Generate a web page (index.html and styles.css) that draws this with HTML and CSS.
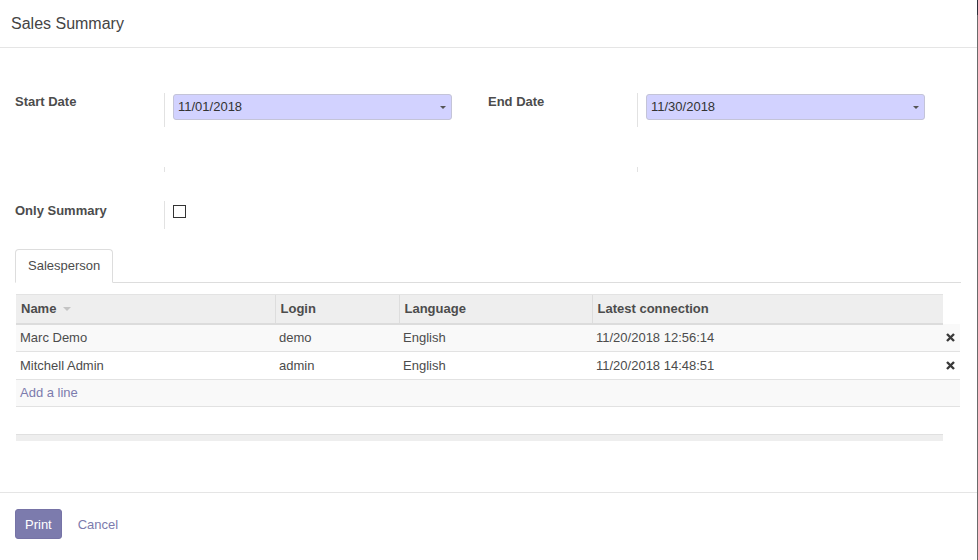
FILE: index.html
```html
<!DOCTYPE html>
<html>
<head>
<meta charset="utf-8">
<link rel="stylesheet" href="styles.css">
</head>
<body>
<div class="page">
  <div class="modal">
    <header class="head"><h4 class="title">Sales Summary</h4></header>
    <main class="content">
      <div class="form">
        <div class="grp">
          <div class="lbl">Start Date</div>
          <div class="fld row1"><div class="inp"><span>11/01/2018</span><i class="caret"></i></div></div>
          <div class="lbl"></div>
          <div class="fld row2"></div>
          <div class="lbl lbl3">Only Summary</div>
          <div class="fld row3"><span class="chk"></span></div>
        </div>
        <div class="grp">
          <div class="lbl">End Date</div>
          <div class="fld row1"><div class="inp"><span>11/30/2018</span><i class="caret"></i></div></div>
          <div class="lbl"></div>
          <div class="fld row2"></div>
        </div>
      </div>
      <div class="tabs"><div class="tab">Salesperson</div></div>
      <table class="list">
        <colgroup><col class="c1"><col class="c2"><col class="c3"><col class="c4"><col class="c5"></colgroup>
        <thead>
          <tr><th>Name <i class="sort"></i></th><th>Login</th><th>Language</th><th>Latest connection</th><th class="blank"></th></tr>
        </thead>
        <tbody>
          <tr class="odd"><td>Marc Demo</td><td>demo</td><td>English</td><td>11/20/2018 12:56:14</td><td class="del"><svg width="9" height="9" viewBox="0 0 9 9"><path d="M1 1L8 8M8 1L1 8" stroke="#3a3a3a" stroke-width="2.4"/></svg></td></tr>
          <tr><td>Mitchell Admin</td><td>admin</td><td>English</td><td>11/20/2018 14:48:51</td><td class="del"><svg width="9" height="9" viewBox="0 0 9 9"><path d="M1 1L8 8M8 1L1 8" stroke="#3a3a3a" stroke-width="2.4"/></svg></td></tr>
          <tr class="odd"><td colspan="5"><a class="add">Add a line</a></td></tr>
        </tbody>
      </table>
      <div class="listfoot"></div>
    </main>
    <footer class="foot">
      <button class="btn">Print</button>
      <a class="cancel">Cancel</a>
    </footer>
  </div>
  <div class="edge"></div>
</div>
</body>
</html>
```
FILE: styles.css
```css
* { box-sizing: border-box; }
html, body { margin: 0; padding: 0; background: #fff; }
body { font-family: "Liberation Sans", Arial, sans-serif; font-size: 13px; color: #4c4c4c; }
.page { display: flex; width: 978px; height: 560px; }
.modal { width: 977px; display: flex; flex-direction: column; }
.edge { width: 1px; background: linear-gradient(#2f2f3a 0, #2f2f3a 15px, #6a6a6a 15px); }
.head { height: 48px; border-bottom: 1px solid #e5e5e5; padding: 0 11px; }
.title { margin: 0; font-weight: normal; font-size: 16px; line-height: 47px; color: #444; }
.content { padding: 45px 15px 0 15px; height: 445px; border-bottom: 1px solid #e5e5e5; }
.form { display: flex; }
.grp { width: 473px; display: grid; grid-template-columns: 149px 1fr; align-content: start; }
.lbl { font-weight: bold; line-height: 17px; padding-top: 0; color: #4c4c4c; }
.fld { border-left: 1px solid #e2e2e2; padding-left: 8px; }
.row1 { height: 34px; padding-top: 1px; }
.row2 { height: 5px; margin-top: 40px; }
.lbl3 { margin-top: 29px; padding-top: 1px; }
.row3 { height: 28px; margin-top: 29px; padding-top: 4px; }
.inp { width: 279px; height: 26px; background: #d2d2ff; border: 1px solid #c4c4d8; border-radius: 3px; display: flex; align-items: center; justify-content: space-between; padding: 0 5px 1px 4px; color: #333; }
.caret { width: 0; height: 0; border-left: 3px solid transparent; border-right: 3px solid transparent; border-top: 3px solid #555; margin-top: 1px; }
.chk { display: block; width: 13px; height: 13px; border: 1px solid #333; background: #fff; }
.tabs { margin-top: 20px; width: 946px; border-bottom: 1px solid #ddd; display: flex; height: 34px; }
.tab { height: 34px; border: 1px solid #ddd; border-bottom: 1px solid #fff; border-radius: 4px 4px 0 0; padding: 0 12px; line-height: 32px; background: #fff; color: #4c4c4c; }
.list { margin: 11px 0 0 1px; border-collapse: collapse; table-layout: fixed; width: 944px; }
.c1 { width: 259px; } .c2 { width: 124px; } .c3 { width: 193px; } .c4 { width: 351px; } .c5 { width: 17px; }
.list th { background: #eee; border-top: 1px solid #e3e3e3; border-bottom: 2px solid #dcdcdc; border-left: 1px solid #ddd; height: 29px; padding: 0 5px 1px 5px; text-align: left; font-weight: bold; color: #4c4c4c; }
.list th:first-child { border-left: none; }
.list th.blank { background: #fff; border: none; }
.sort { display: inline-block; width: 0; height: 0; border-left: 4px solid transparent; border-right: 4px solid transparent; border-top: 4px solid #c4c4c4; vertical-align: middle; margin-left: 3px; }
.list td { height: 28px; padding: 0 3px 0 4px; border-bottom: 1px solid #e2e2e2; color: #4c4c4c; white-space: nowrap; }
.list tr.odd td { background: #f9f9f9; }
.list tbody tr:last-child td { height: 27px; padding-bottom: 2px; }
.del { text-align: center; padding: 0 2px 0 0 !important; }
.del svg { display: block; margin: 0 auto; }
.add { color: #7c7bad; }
.listfoot { margin: 27px 0 0 1px; width: 927px; height: 7px; background: #eee; border-top: 1px solid #e0e0e0; }
.foot { display: flex; align-items: center; padding: 16px 15px; gap: 16px; }
.btn { height: 30px; background: #7c7bad; color: #fff; border: 1px solid #7673a6; border-radius: 3px; padding: 0 9px; font: 13px "Liberation Sans", Arial, sans-serif; }
.cancel { color: #7c7bad; }
```
